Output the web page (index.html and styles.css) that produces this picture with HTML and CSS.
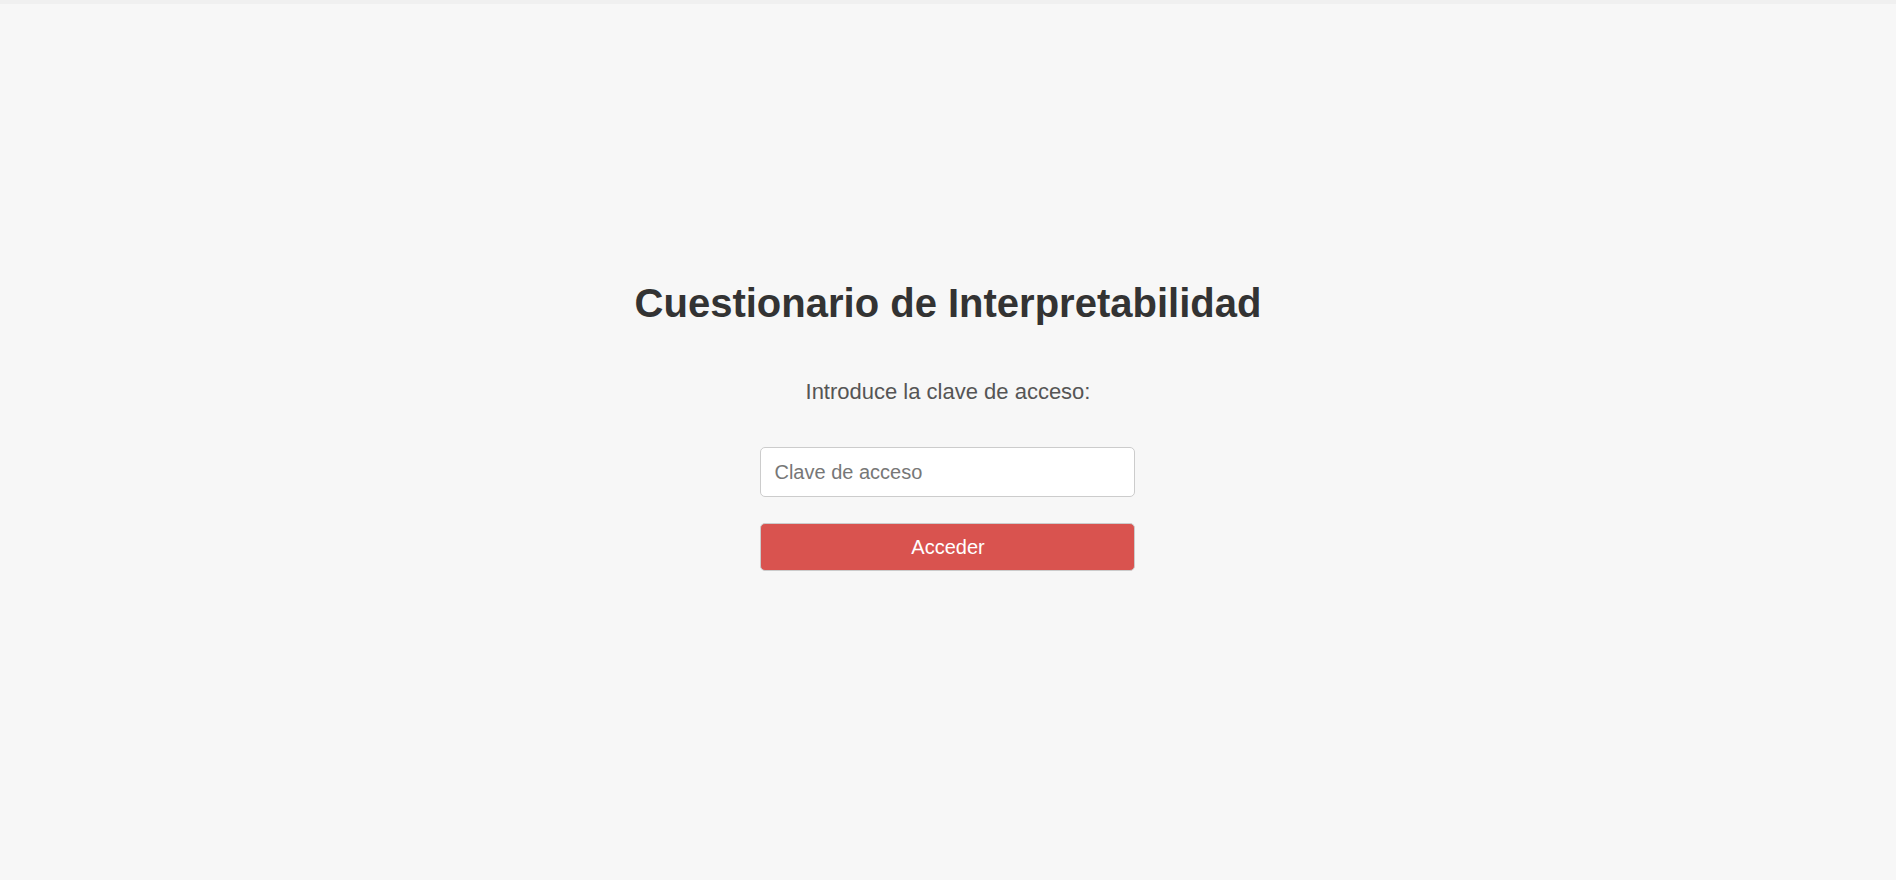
FILE: index.html
```html
<!DOCTYPE html>
<html lang="es">
<head>
<meta charset="utf-8">
<title>Cuestionario de Interpretabilidad</title>
<link rel="stylesheet" href="styles.css">
</head>
<body>
<div class="topbar"></div>
<main class="page">
  <div class="login">
    <h1 class="title">Cuestionario de Interpretabilidad</h1>
    <p class="prompt">Introduce la clave de acceso:</p>
    <input class="key" type="password" placeholder="Clave de acceso">
    <button class="submit" type="button">Acceder</button>
  </div>
</main>
</body>
</html>
```
FILE: styles.css
```css
html, body {
  margin: 0;
  padding: 0;
  height: 100%;
  background: #f7f7f7;
  font-family: "Liberation Sans", Arial, sans-serif;
}
.topbar {
  height: 4px;
  background: #f0f0f0;
}
.page {
  height: calc(100% - 4px);
  display: flex;
  justify-content: center;
  align-items: center;
}
.login {
  display: flex;
  flex-direction: column;
  align-items: center;
  margin-bottom: 33px;
}
.title {
  margin: 0;
  font-size: 40px;
  line-height: 46px;
  font-weight: bold;
  color: #333;
}
.prompt {
  margin: 53px 0 0;
  font-size: 22px;
  line-height: 26px;
  color: #555;
}
.key {
  margin-top: 42px;
  box-sizing: border-box;
  width: 375px;
  height: 50px;
  padding: 0 13px;
  border: 1px solid #ccc;
  border-radius: 5px;
  background: #fff;
  font-family: inherit;
  font-size: 20px;
  color: #333;
}
.key::placeholder {
  color: #777;
}
.submit {
  margin-top: 26px;
  box-sizing: border-box;
  width: 375px;
  height: 48px;
  border: 1px solid #ccc;
  border-radius: 5px;
  background: #d9534f;
  color: #fff;
  font-family: inherit;
  font-size: 20px;
}
```
